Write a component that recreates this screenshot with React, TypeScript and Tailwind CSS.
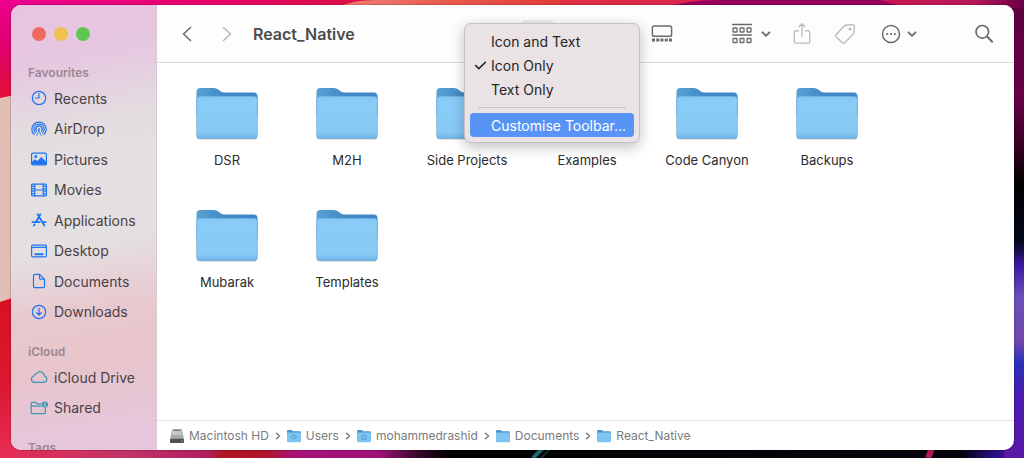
import type { ReactNode } from "react";
import { FaCheck } from "react-icons/fa6";

const folders = [
  "DSR",
  "M2H",
  "Side Projects",
  "Examples",
  "Code Canyon",
  "Backups",
  "Mubarak",
  "Templates",
];

const Stroke = ({
  children,
  size = 18,
  width = 1.2,
}: {
  children: ReactNode;
  size?: number;
  width?: number;
}) => (
  <svg
    width={size}
    height={size}
    viewBox={`0 0 ${size} ${size}`}
    fill="none"
    stroke="currentColor"
    strokeWidth={width}
    strokeLinecap="round"
    strokeLinejoin="round"
    className="shrink-0"
    aria-hidden="true"
  >
    {children}
  </svg>
);

const favourites = [
  {
    name: "Recents",
    icon: (
      <>
        <circle cx="9" cy="9" r="6.7" />
        <path d="M9 4.6V9H5.4" />
      </>
    ),
  },
  {
    name: "AirDrop",
    icon: (
      <>
        <path d="M4.2 14.6a7.2 7.2 0 1 1 9.6 0" />
        <path d="M5.4 12.8a5.1 5.1 0 1 1 7.2 0" />
        <path d="M6.6 11.2a3.1 3.1 0 1 1 4.8 0" />
        <circle cx="9" cy="9.2" r="1" fill="currentColor" stroke="none" />
        <path d="M9 10.5l-2.2 5M9 10.5l2.2 5" strokeWidth="0.8" />
      </>
    ),
  },
  {
    name: "Pictures",
    icon: (
      <>
        <rect x="1.6" y="3.1" width="14.8" height="11.8" rx="1.2" />
        <path
          d="M2 14.5v-2.8l3-2.5 2.3 1.8 4-3.9 4.9 4.6v2.8z"
          fill="currentColor"
          stroke="none"
        />
        <circle cx="5.8" cy="6.5" r="1.5" fill="currentColor" stroke="none" />
      </>
    ),
  },
  {
    name: "Movies",
    icon: (
      <>
        <rect x="1.6" y="3.1" width="14.8" height="11.8" rx="1" />
        <path d="M4.8 3.1v11.8M13.2 3.1v11.8M4.8 9h8.4M1.6 5.4h3M1.6 7.8h3M1.6 10.2h3M1.6 12.6h3M13.4 5.4h3M13.4 7.8h3M13.4 10.2h3M13.4 12.6h3" />
      </>
    ),
  },
  {
    name: "Applications",
    icon: (
      <g strokeWidth="1.8">
        <path d="M10.4 3.2L6.4 10.2M7.6 3.2l6.8 11.4M2.4 11.2h7.2M13 11.2h2.6M4.6 13.4l-.7 1.2" />
      </g>
    ),
  },
  {
    name: "Desktop",
    icon: (
      <>
        <rect x="1.6" y="3.1" width="14.8" height="11.8" rx="1.2" />
        <path d="M2 5.3h14" />
        <path d="M5.3 12.2h7.4" strokeWidth="2" />
      </>
    ),
  },
  {
    name: "Documents",
    icon: (
      <path d="M9.6 2.3H4.9a1.4 1.4 0 0 0-1.4 1.4v10.6a1.4 1.4 0 0 0 1.4 1.4h8.2a1.4 1.4 0 0 0 1.4-1.4V7.2zM9.6 2.3v3.9a1 1 0 0 0 1 1h3.9" />
    ),
  },
  {
    name: "Downloads",
    icon: (
      <>
        <circle cx="9" cy="9" r="6.7" />
        <path d="M9 5.4v6.4M6.6 9.6L9 12l2.4-2.4" />
      </>
    ),
  },
];

const cloud = [
  {
    name: "iCloud Drive",
    icon: (
      <path d="M4.4 14.3a3.2 3.2 0 0 1-.5-6.3 2 2 0 0 1 2.4-1.9 4.2 4.2 0 0 1 8 1.9 3.2 3.2 0 0 1-.3 6.3z" />
    ),
  },
  {
    name: "Shared",
    icon: (
      <>
        <path d="M11 4.8H6.9L5.8 3.4H2.2a1 1 0 0 0-1 1v9.2a1 1 0 0 0 1 1h12.2a1 1 0 0 0 1-1V9.6M1.2 7.1h9.6" />
        <circle cx="14.8" cy="5.6" r="3.2" fill="currentColor" stroke="none" />
        <circle cx="14.8" cy="4.8" r="0.9" fill="#e8c8d6" stroke="none" />
        <path d="M13.3 7.3q1.5-1.6 3 0" stroke="#e8c8d6" strokeWidth="0.9" />
      </>
    ),
  },
];

const Folder = () => (
  <svg width="62" height="54" viewBox="0 0 62 54" aria-hidden="true">
    <defs>
      <linearGradient id="folderBack" x1="0" x2="1" y1="0" y2="0">
        <stop offset="0" stopColor="#5aa2d2" />
        <stop offset="0.45" stopColor="#4189c6" />
        <stop offset="1" stopColor="#3f88c9" />
      </linearGradient>
      <linearGradient id="folderFront" x1="0" x2="0" y1="0" y2="1">
        <stop offset="0" stopColor="#84c6f3" />
        <stop offset="0.12" stopColor="#8accf7" />
        <stop offset="0.85" stopColor="#87caf6" />
        <stop offset="1" stopColor="#6fb5e6" />
      </linearGradient>
    </defs>
    <rect x="0.5" y="9" width="61" height="43.4" rx="3.5" fill="#b9bec4" />
    <path
      d="M.5 5Q.5 1 4.5 1H18q2.4 0 4.2 1.5l2.6 2Q26.4 5.6 28.4 5.6H58q3.5 0 3.5 3.6V30H.5z"
      fill="url(#folderBack)"
    />
    <rect x="0.5" y="9.4" width="61" height="42.4" rx="3.5" fill="#6bb1e1" />
    <rect x="1.2" y="9.4" width="59.6" height="41.8" rx="3" fill="url(#folderFront)" />
  </svg>
);

const MiniFolder = ({ children }: { children?: ReactNode }) => (
  <svg width="14" height="14" viewBox="0 0 14 14" aria-hidden="true">
    <path d="M0 2.2Q0 1 1.2 1H4.6L6 2.2H12.8Q14 2.2 14 3.4V8H0z" fill="#4a93cd" />
    <rect y="3.4" width="14" height="9.8" rx="1" fill="#7fc3f0" />
    <g fill="none" stroke="#4c9bd3" strokeWidth="0.9">
      {children}
    </g>
  </svg>
);

const path = [
  {
    name: "Macintosh HD",
    icon: (
      <svg width="14" height="14" viewBox="0 0 14 14" aria-hidden="true">
        <path d="M2.2 0h9.6L14 10.5H0z" fill="#a5abab" />
        <path d="M3 1h8l.8 5H2.2z" fill="#c5cbc8" />
        <path d="M4 1.5h6" stroke="#6d7474" />
        <rect y="9.8" width="14" height="4.2" rx="1" fill="#4c5354" />
        <circle cx="12" cy="12" r="0.7" fill="#8fd08f" />
      </svg>
    ),
  },
  {
    name: "Users",
    icon: (
      <MiniFolder>
        <circle cx="6.5" cy="8" r="1.8" />
        <path d="M8.5 6.5q2 1.5 0 3.2" />
      </MiniFolder>
    ),
  },
  {
    name: "mohammedrashid",
    icon: (
      <MiniFolder>
        <path d="M4 8l3-2.4L10 8M5 7.6v2.8h4V7.6" />
      </MiniFolder>
    ),
  },
  { name: "Documents", icon: <MiniFolder /> },
  { name: "React_Native", icon: <MiniFolder /> },
];

const Wallpaper = () => (
  <svg
    className="absolute inset-0 h-full w-full"
    viewBox="0 0 1024 458"
    preserveAspectRatio="none"
    aria-hidden="true"
  >
    <defs>
      <linearGradient id="left" x1="0" x2="0" y1="0" y2="1">
        <stop offset="0" stopColor="#ee0090" />
        <stop offset="0.1" stopColor="#e0006e" />
        <stop offset="0.21" stopColor="#e0103a" />
        <stop offset="0.6" stopColor="#d60f1c" />
        <stop offset="0.85" stopColor="#dc1830" />
        <stop offset="1" stopColor="#e62c55" />
      </linearGradient>
      <linearGradient id="top" x1="0" x2="1" y1="0" y2="0">
        <stop offset="0" stopColor="#ee0090" />
        <stop offset="0.2" stopColor="#e8006c" />
        <stop offset="0.34" stopColor="#dc0e48" />
        <stop offset="0.5" stopColor="#e2323c" />
        <stop offset="0.68" stopColor="#dc2450" />
        <stop offset="0.88" stopColor="#c41850" />
        <stop offset="0.95" stopColor="#b8185a" />
        <stop offset="1" stopColor="#6a0048" />
      </linearGradient>
      <linearGradient id="coral" x1="0" x2="1" y1="0" y2="0">
        <stop offset="0" stopColor="#f08078" />
        <stop offset="0.5" stopColor="#e85a4c" />
        <stop offset="1" stopColor="#e23a36" />
      </linearGradient>
      <linearGradient id="bottom" x1="0" x2="1" y1="0" y2="0">
        <stop offset="0" stopColor="#e62c55" />
        <stop offset="0.12" stopColor="#c43468" />
        <stop offset="0.2" stopColor="#b02060" />
        <stop offset="0.22" stopColor="#b01420" />
        <stop offset="0.26" stopColor="#b01430" />
        <stop offset="0.29" stopColor="#a81278" />
        <stop offset="0.37" stopColor="#a01278" />
        <stop offset="0.41" stopColor="#300828" />
        <stop offset="0.44" stopColor="#000000" />
        <stop offset="0.94" stopColor="#05020c" />
        <stop offset="0.97" stopColor="#281080" />
        <stop offset="1" stopColor="#4a12a8" />
      </linearGradient>
      <linearGradient id="right" x1="0" x2="0" y1="0" y2="1">
        <stop offset="0" stopColor="#5e0040" />
        <stop offset="0.2" stopColor="#6a0048" />
        <stop offset="0.32" stopColor="#30001c" />
        <stop offset="0.39" stopColor="#000000" />
        <stop offset="0.52" stopColor="#04081c" />
        <stop offset="0.57" stopColor="#3a18a0" />
        <stop offset="0.64" stopColor="#6a50b8" />
        <stop offset="0.74" stopColor="#7048b0" />
        <stop offset="0.79" stopColor="#2830b8" />
        <stop offset="0.86" stopColor="#4a1cb0" />
        <stop offset="1" stopColor="#5a18a8" />
      </linearGradient>
    </defs>
    <rect width="1024" height="458" fill="url(#bottom)" />
    <rect width="1024" height="30" fill="url(#top)" />
    <path d="M340 6Q355 0 375 0H560V6z" fill="url(#coral)" />
    <path d="M672 6Q690 0 715 0H880L900 6z" fill="#98005e" />
    <rect width="30" height="452" fill="url(#left)" />
    <path d="M0 98L30 92V292L0 302z" fill="#e2bfb4" />
    <rect x="1004" y="8" width="20" height="450" fill="url(#right)" />
    <path d="M533 458l10-10" stroke="#1d6c6c" strokeWidth="4" />
    <path d="M541 458l10-10" stroke="#123a3c" strokeWidth="1.5" />
    <path d="M928 458l4-10" stroke="#b8185a" strokeWidth="6" />
  </svg>
);

const SidebarItem = ({ name, children }: { name: string; children: ReactNode }) => (
  <a href="#" className="flex items-center gap-[6px] pl-[19px] text-[14px]">
    {children}
    <span className="whitespace-nowrap text-[#4a4146]">{name}</span>
  </a>
);

const SidebarTitle = ({ children }: { children: ReactNode }) => (
  <h2 className="flex h-[21px] items-center pl-[17px] text-[12px] font-semibold text-[#9b8794]">
    {children}
  </h2>
);

const Down = () => (
  <Stroke size={10} width={1.8}>
    <path d="M1.5 3.3L5 6.9l3.5-3.6" />
  </Stroke>
);

export default function App() {
  return (
    <div className="relative flex h-screen w-full pt-[5px] pr-[10px] pb-2 pl-[11px] font-['Inter','Liberation_Sans',sans-serif]">
      <Wallpaper />
      <div className="relative flex min-w-0 flex-1">
        <div className="flex min-w-0 flex-1 overflow-hidden rounded-[10px] bg-white shadow-[0_0_2px_rgba(0,0,0,0.5)]">
          <aside className="w-[146px] shrink-0 overflow-hidden border-r border-[#d8c8d2] bg-[linear-gradient(170deg,#e8c3e0_0%,#e6c8e0_14%,#e3dbe0_26%,#e4e0e2_36%,#e4dfe1_54%,#e8c8cf_68%,#e8c5cb_78%,#e6c6da_94%)]">
            <div className="flex h-[57px] items-center gap-2 pl-[21px]">
              <button aria-label="Close" className="size-[14px] rounded-full bg-[#ed6a5f]"></button>
              <button aria-label="Minimise" className="size-[14px] rounded-full bg-[#f0c04c]"></button>
              <button aria-label="Zoom" className="size-[14px] rounded-full bg-[#61c554]"></button>
            </div>
            <nav className="flex flex-col gap-[14px]">
              <section>
                <SidebarTitle>Favourites</SidebarTitle>
                <div className="grid h-[244px] grid-rows-8 text-[#1f74f0]">
                  {favourites.map((item) => (
                    <SidebarItem key={item.name} name={item.name}>
                      <Stroke>{item.icon}</Stroke>
                    </SidebarItem>
                  ))}
                </div>
              </section>
              <section>
                <SidebarTitle>iCloud</SidebarTitle>
                <div className="grid h-[61px] grid-rows-2 text-[#3b97b5]">
                  {cloud.map((item) => (
                    <SidebarItem key={item.name} name={item.name}>
                      <Stroke>{item.icon}</Stroke>
                    </SidebarItem>
                  ))}
                </div>
              </section>
              <SidebarTitle>Tags</SidebarTitle>
            </nav>
          </aside>

          <main className="flex min-w-0 flex-1 flex-col">
            <header className="flex h-[58px] shrink-0 items-center border-b border-[#dcdcdc] bg-[#fdfdfd] px-5 text-[#6b6b6b]">
              <button aria-label="Back">
                <Stroke size={20} width={1.6}>
                  <path d="M13.5 3.5L6.5 10l7 6.500" />
                </Stroke>
              </button>
              <button aria-label="Forward" className="ml-5 text-[#b9b9b9]">
                <Stroke size={20} width={1.6}>
                  <path d="M6.5 3.5l7 6.5-7 6.5" />
                </Stroke>
              </button>
              <h1 className="ml-4 text-[16px] font-semibold text-[#4c4c4c]">React_Native</h1>

              <div className="ml-auto flex items-center">
                <button
                  aria-label="Icons"
                  className="mr-[96px] h-[28px] w-[35px] rounded-md bg-[#ececec]"
                ></button>
                <button aria-label="Gallery" className="mr-[58px]">
                  <Stroke size={22} width={1.5}>
                    <rect x="1.4" y="3" width="19.2" height="10.3" rx="1.8" />
                    <path
                      d="M1 17h20"
                      strokeWidth="2.8"
                      strokeLinecap="butt"
                      strokeDasharray="3 1.25"
                    />
                  </Stroke>
                </button>
                <button aria-label="Group" className="mr-5 flex items-center gap-2">
                  <Stroke size={22} width={1.3}>
                    <path d="M1.5 1.5h19M1.5 12h19" />
                    <rect x="2" y="5" width="4" height="4" rx="0.6" />
                    <rect x="9" y="5" width="4" height="4" rx="0.6" />
                    <rect x="16" y="5" width="4" height="4" rx="0.6" />
                    <rect x="2" y="15.5" width="4" height="4" rx="0.6" />
                    <rect x="9" y="15.5" width="4" height="4" rx="0.6" />
                    <rect x="16" y="15.5" width="4" height="4" rx="0.6" />
                  </Stroke>
                  <Down />
                </button>
                <button aria-label="Share" className="mr-[21px] text-[#bcbcbc]">
                  <Stroke size={22} width={1.4}>
                    <path d="M7.5 7.7H5a1.7 1.7 0 0 0-1.7 1.7v9a1.7 1.7 0 0 0 1.7 1.7h12a1.7 1.7 0 0 0 1.7-1.7v-9A1.7 1.7 0 0 0 17 7.7h-2.5M11 13.5V1M8 3.800l3-3 3 3" />
                  </Stroke>
                </button>
                <button aria-label="Tags" className="mr-[25px] text-[#bcbcbc]">
                  <Stroke size={22} width={1.4}>
                    <path d="M11.8 2.2l6-.6q2.6-.2 2.6 2.4l-.4 5.2q-.1 1-.8 1.700l-8.600 8.900q-1.200 1.200-2.400 0l-6-6q-1.200-1.200 0-2.400l8-8.400q.7-.7 1.600-.8z" />
                    <circle cx="16" cy="6" r="0.8" />
                  </Stroke>
                </button>
                <button aria-label="Actions" className="mr-[57px] flex items-center gap-[6px]">
                  <Stroke size={20} width={1.5}>
                    <circle cx="10" cy="10" r="8.5" />
                    <path d="M6.2 10h.01M10 10h.01M13.8 10h.01" strokeWidth="2.2" />
                  </Stroke>
                  <Down />
                </button>
                <button aria-label="Search">
                  <Stroke size={20} width={1.7}>
                    <circle cx="8.3" cy="7.8" r="6.3" />
                    <path d="M13 12.500l5.200 5.200" strokeWidth="2.1" />
                  </Stroke>
                </button>
              </div>
            </header>

            <div className="grid flex-1 auto-rows-[122px] grid-cols-[repeat(auto-fill,120px)] content-start overflow-hidden pt-6 pr-5 pl-[10px]">
              {folders.map((name) => (
                <div key={name} className="flex flex-col items-center gap-[9px]">
                  <Folder />
                  <span className="text-[13px] leading-[20px] text-[#2b2b2b]">{name}</span>
                </div>
              ))}
            </div>

            <footer className="flex h-[30px] shrink-0 items-center gap-1 border-t border-[#e2e2e2] pl-[13px] text-[12px] text-[#7b7b7b]">
              {path.map((item, i) => (
                <div key={item.name} className="flex items-center gap-1">
                  {i > 0 && (
                    <Stroke size={10} width={1.5}>
                      <path d="M3.5 2.2L6.5 5l-3 2.8" />
                    </Stroke>
                  )}
                  <a href="#" className="flex items-center gap-[5px]">
                    {item.icon}
                    {item.name}
                  </a>
                </div>
              ))}
            </footer>
          </main>
        </div>

        <div
          role="menu"
          className="absolute top-[18px] left-[453px] w-[176px] rounded-[7px] border border-[#c6c2c4] bg-[#e9e3e5] p-[5px] text-[14px] text-[#262426] shadow-[0_4px_14px_rgba(0,0,0,0.25)]"
        >
          <button role="menuitem" className="flex h-6 w-full items-center pl-[21px]">
            Icon and Text
          </button>
          <button role="menuitem" className="flex h-6 w-full items-center gap-1 pl-1">
            <FaCheck className="size-[13px]" />
            Icon Only
          </button>
          <button role="menuitem" className="flex h-6 w-full items-center pl-[21px]">
            Text Only
          </button>
          <hr className="mx-2 mt-[6px] mb-[5px] border-[#c9c3c6]" />
          <button
            role="menuitem"
            className="flex h-6 w-full items-center rounded-[4px] bg-[#5894f6] pl-[21px] whitespace-nowrap text-white"
          >
            Customise Toolbar...
          </button>
        </div>
      </div>
    </div>
  );
}
